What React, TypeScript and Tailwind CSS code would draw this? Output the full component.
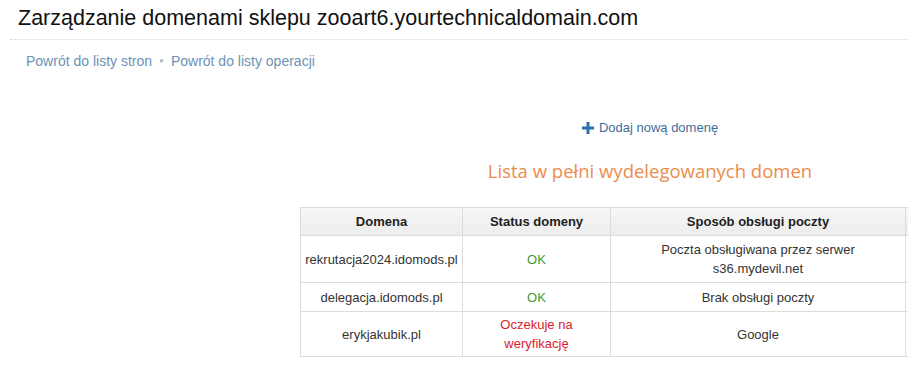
const rows = [
    {
        domain: "rekrutacja2024.idomods.pl",
        status: ["OK"],
        ok: true,
        mail: ["Poczta obsługiwana przez serwer", "s36.mydevil.net"],
        h: "h-[47px]",
    },
    {
        domain: "delegacja.idomods.pl",
        status: ["OK"],
        ok: true,
        mail: ["Brak obsługi poczty"],
        h: "h-[29px]",
    },
    {
        domain: "erykjakubik.pl",
        status: ["Oczekuje na", "weryfikację"],
        ok: false,
        mail: ["Google"],
        h: "h-[45px]",
    },
];

const App = () => {
    return (
        <div className="w-[908px] h-[366px] overflow-hidden bg-white font-['Liberation_Sans',Arial,sans-serif] text-[#333]">
            {/* PAGE TITLE */}
            <h1 className="pl-[18px] pt-[6px] h-[39px] text-[21.5px] leading-[25px] text-[#111]">
                Zarządzanie domenami sklepu zooart6.yourtechnicaldomain.com
            </h1>
            <div className="ml-[10px] border-t border-dotted border-[#d4d4d4]" />

            {/* BREADCRUMB LINKS */}
            <div className="flex items-center pl-[26px] pt-[12px] text-[14px] leading-[18px] text-[#6b92b4]">
                <a href="#">Powrót do listy stron</a>
                <span className="mx-[7px] text-[8px] text-[#b3bec8]">●</span>
                <a href="#">Powrót do listy operacji</a>
            </div>

            {/* MAIN */}
            <div className="flex">
                <div className="w-[300px] shrink-0" />
                <div className="w-[700px] shrink-0">
                    <div className="flex items-center justify-center pt-[50px] text-[13px] leading-[16px] text-[#3f6d9b]">
                        <svg width="12" height="12" viewBox="0 0 12 12" className="mr-[5px]">
                            <rect x="4.5" y="0" width="3" height="12" fill="#2f6fb0" />
                            <rect x="0" y="4.5" width="12" height="3" fill="#2f6fb0" />
                        </svg>
                        <span>Dodaj nową domenę</span>
                    </div>

                    <h2 className="pt-[23px] text-center font-['Open_Sans',sans-serif] text-[18.5px] leading-[24px] text-[#ec8c4c]">
                        Lista w pełni wydelegowanych domen
                    </h2>

                    <table className="mt-[24px] w-[700px] border-collapse border border-[#dcdcdc] text-[13px] leading-[19px] table-fixed">
                        <colgroup>
                            <col className="w-[162px]" />
                            <col className="w-[148px]" />
                            <col className="w-[295px]" />
                            <col />
                        </colgroup>
                        <thead>
                            <tr className="h-[28px] bg-gradient-to-b from-[#f7f7f7] to-[#ececec]">
                                <th className="border border-[#dcdcdc] p-0 font-bold text-[#222]">Domena</th>
                                <th className="border border-[#dcdcdc] p-0 font-bold text-[#222]">Status domeny</th>
                                <th className="border border-[#dcdcdc] p-0 font-bold text-[#222]">Sposób obsługi poczty</th>
                                <th className="border border-[#dcdcdc] p-0" />
                            </tr>
                        </thead>
                        <tbody>
                            {rows.map((r) => (
                                <tr key={r.domain} className={r.h}>
                                    <td className="border border-[#dcdcdc] p-0 text-center">{r.domain}</td>
                                    <td
                                        className={`border border-[#dcdcdc] p-0 text-center ${
                                            r.ok ? "text-[#3c9a3c]" : "text-[#d8222e]"
                                        }`}
                                    >
                                        {r.status.map((s) => (
                                            <div key={s}>{s}</div>
                                        ))}
                                    </td>
                                    <td className="border border-[#dcdcdc] p-0 text-center">
                                        {r.mail.map((m) => (
                                            <div key={m}>{m}</div>
                                        ))}
                                    </td>
                                    <td className="border border-[#dcdcdc] p-0" />
                                </tr>
                            ))}
                        </tbody>
                    </table>
                </div>
            </div>
        </div>
    );
};

export default App;
